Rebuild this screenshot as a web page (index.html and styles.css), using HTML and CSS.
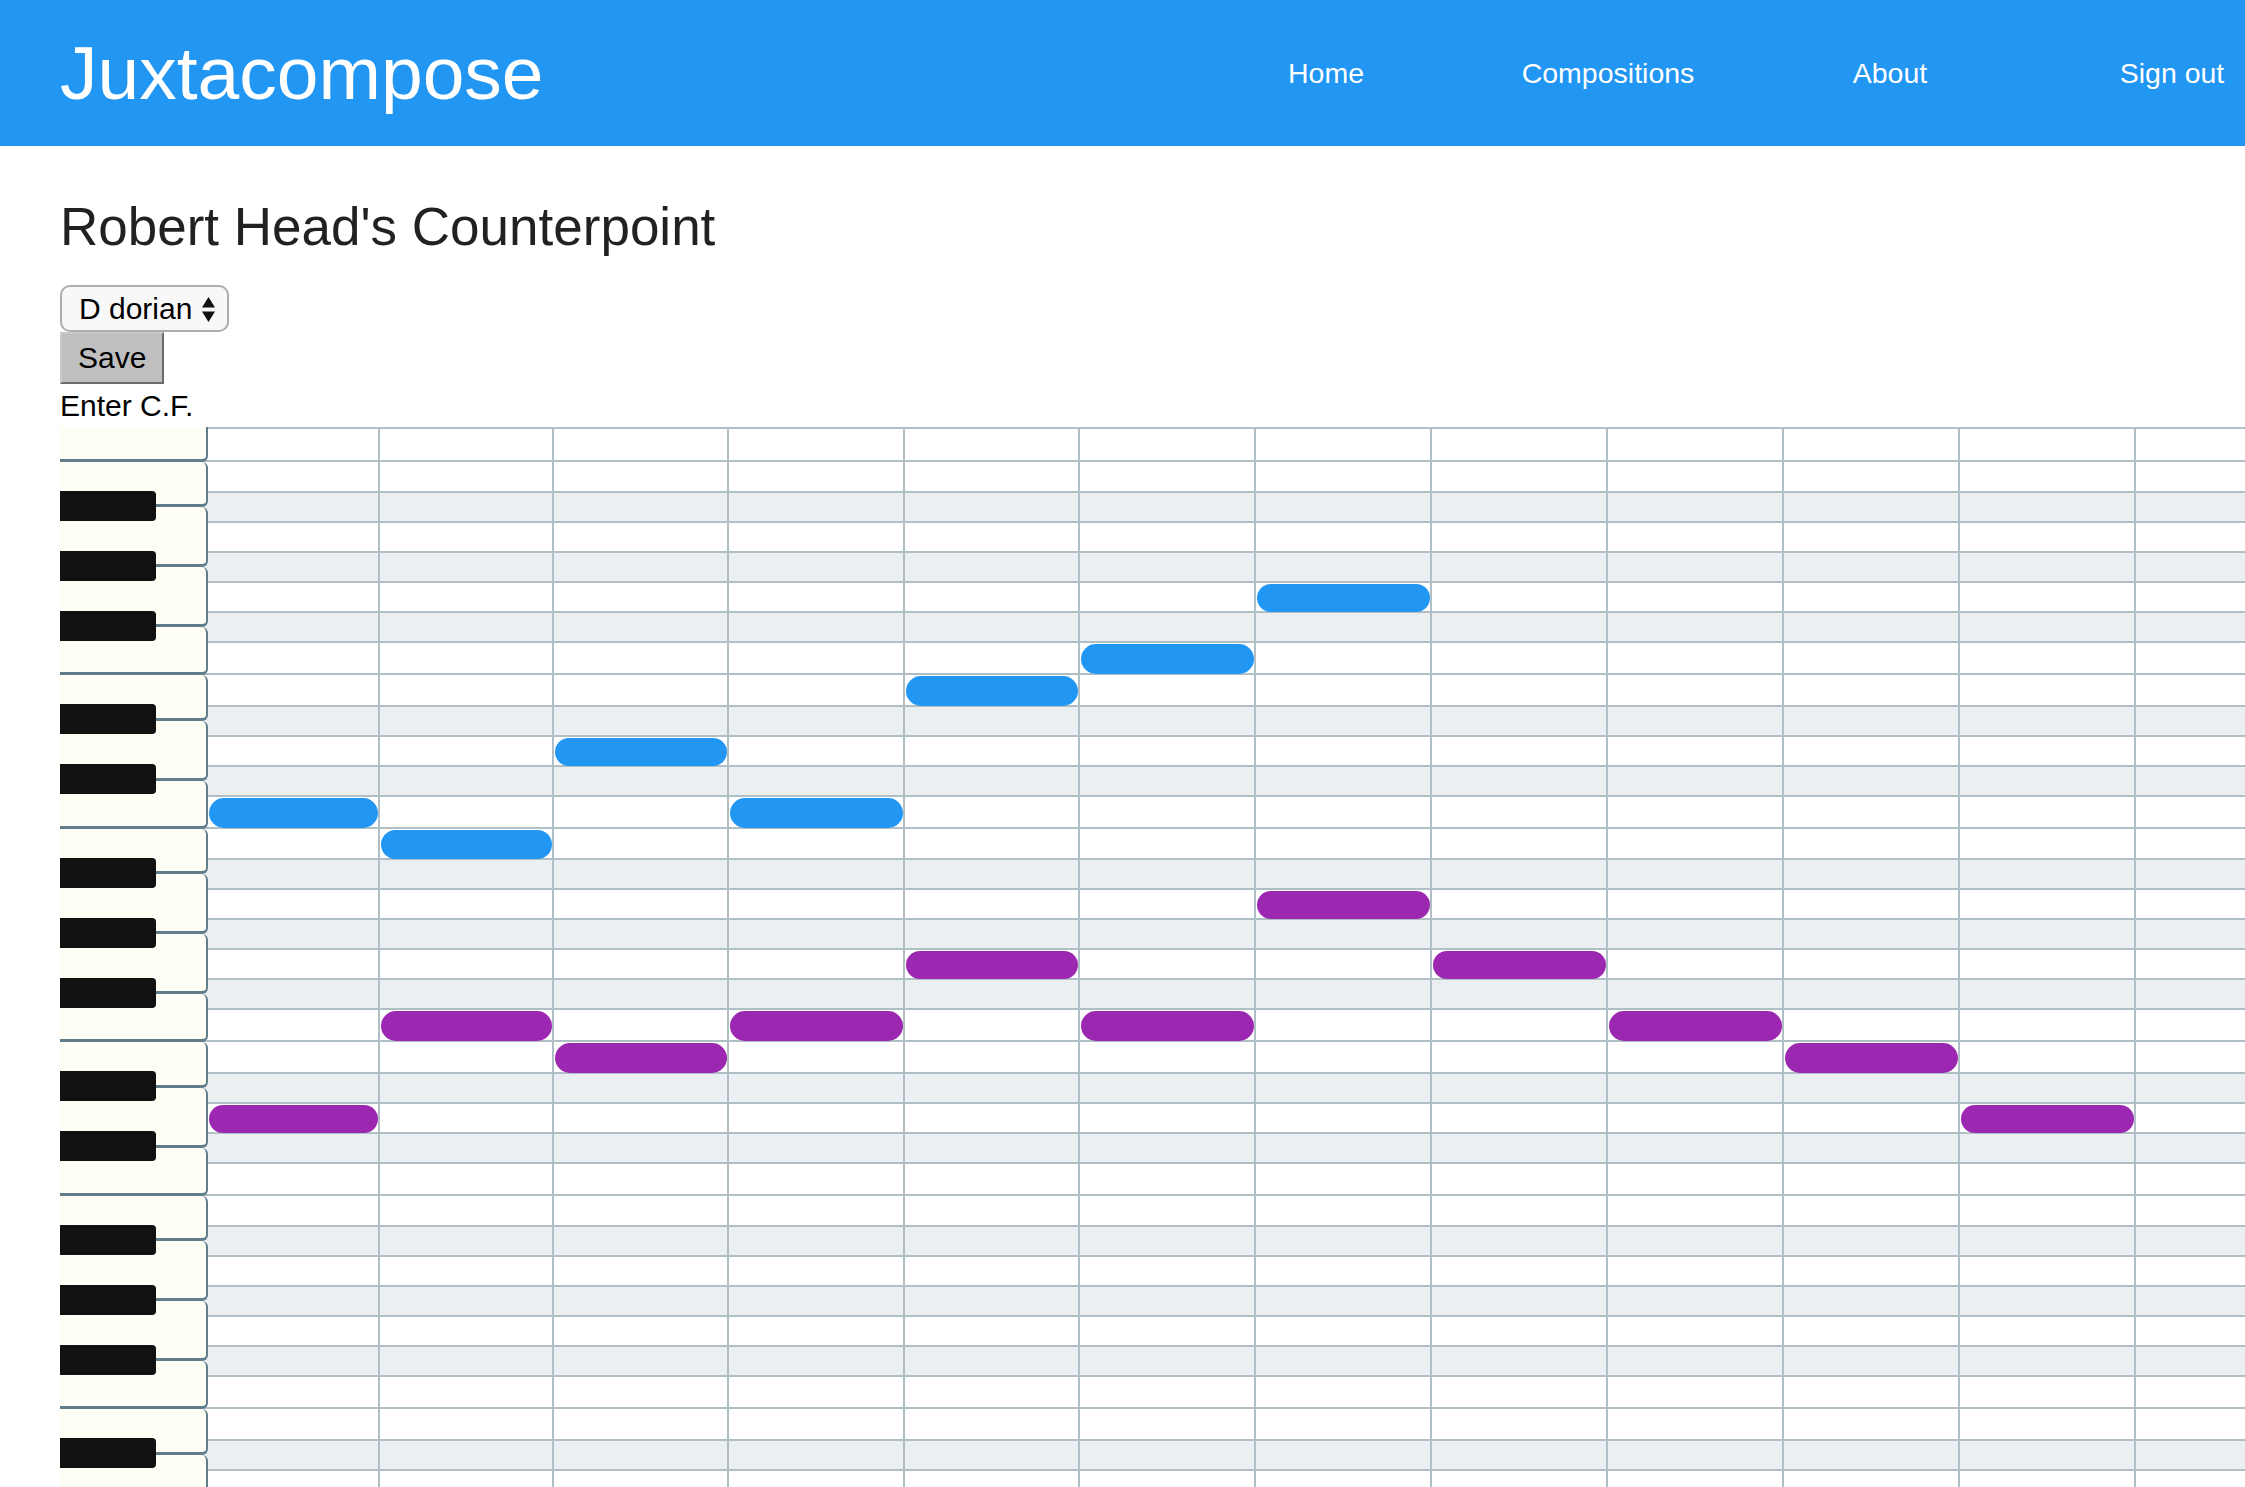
FILE: index.html
```html
<!DOCTYPE html>
<html lang="en">
<head>
<meta charset="utf-8">
<title>Juxtacompose</title>
<link rel="stylesheet" href="styles.css">
</head>
<body>
<header class="topbar">
  <a class="brand" href="#">Juxtacompose</a>
  <ul class="nav">
    <li><a href="#">Home</a></li>
    <li><a href="#">Compositions</a></li>
    <li><a href="#">About</a></li>
    <li><a href="#">Sign out</a></li>
  </ul>
</header>

<main class="page">
  <h1 class="title">Robert Head's Counterpoint</h1>
  <div class="controls">
    <div class="select">
      <span>D dorian</span>
      <svg class="arrows" width="13" height="25" viewBox="0 0 13 25"><polygon points="6.5,0 13,10.5 0,10.5" fill="#111"/><polygon points="0,14.5 13,14.5 6.5,25" fill="#111"/></svg>
    </div>
    <button class="save" type="button">Save</button>
    <div class="label">Enter C.F.</div>
  </div>

  <div class="roll">
    <div class="keys">
      <div class="wk k-top"></div>
      <div class="wk k-b sharp"></div><div class="wk k-a sharp"></div><div class="wk k-g sharp"></div><div class="wk k-f"></div><div class="wk k-e sharp"></div><div class="wk k-d sharp"></div><div class="wk k-c"></div>
      <div class="wk k-b sharp"></div><div class="wk k-a sharp"></div><div class="wk k-g sharp"></div><div class="wk k-f"></div><div class="wk k-e sharp"></div><div class="wk k-d sharp"></div><div class="wk k-c"></div>
      <div class="wk k-b sharp"></div><div class="wk k-a sharp"></div><div class="wk k-g sharp"></div><div class="wk k-f"></div><div class="wk k-e sharp"></div><div class="wk k-d sharp"></div><div class="wk k-c"></div>
    </div>

    <div class="grid">
      <div class="stripes">
        <div class="r top"></div>
        <div class="r w"></div><div class="r b"></div><div class="r"></div><div class="r b"></div><div class="r"></div><div class="r b"></div><div class="r w"></div><div class="r w"></div><div class="r b"></div><div class="r"></div><div class="r b"></div><div class="r w"></div>
        <div class="r w"></div><div class="r b"></div><div class="r"></div><div class="r b"></div><div class="r"></div><div class="r b"></div><div class="r w"></div><div class="r w"></div><div class="r b"></div><div class="r"></div><div class="r b"></div><div class="r w"></div>
        <div class="r w"></div><div class="r b"></div><div class="r"></div><div class="r b"></div><div class="r"></div><div class="r b"></div><div class="r w"></div><div class="r w"></div><div class="r b"></div><div class="r"></div><div class="r b"></div><div class="r w"></div>
      </div>

      <div class="cols">
        <div></div><div></div><div></div><div></div><div></div><div></div><div></div><div></div><div></div><div></div><div></div><div></div><div></div>
      </div>

      <div class="notes">
        <div class="note upper" style="grid-area: 13 / 1"></div>
        <div class="note upper" style="grid-area: 14 / 2"></div>
        <div class="note upper" style="grid-area: 11 / 3"></div>
        <div class="note upper" style="grid-area: 13 / 4"></div>
        <div class="note upper" style="grid-area: 9 / 5"></div>
        <div class="note upper" style="grid-area: 8 / 6"></div>
        <div class="note upper" style="grid-area: 6 / 7"></div>

        <div class="note cf" style="grid-area: 23 / 1"></div>
        <div class="note cf" style="grid-area: 20 / 2"></div>
        <div class="note cf" style="grid-area: 21 / 3"></div>
        <div class="note cf" style="grid-area: 20 / 4"></div>
        <div class="note cf" style="grid-area: 18 / 5"></div>
        <div class="note cf" style="grid-area: 20 / 6"></div>
        <div class="note cf" style="grid-area: 16 / 7"></div>
        <div class="note cf" style="grid-area: 18 / 8"></div>
        <div class="note cf" style="grid-area: 20 / 9"></div>
        <div class="note cf" style="grid-area: 21 / 10"></div>
        <div class="note cf" style="grid-area: 23 / 11"></div>
      </div>
    </div>
  </div>
</main>
</body>
</html>
```

FILE: styles.css
```css
* {
  box-sizing: border-box;
}

html {
  overflow: hidden;
}

body {
  margin: 0;
  background: #fff;
  color: #000;
  font-family: "Liberation Sans", Arial, Helvetica, sans-serif;
}

/* ---------- top bar ---------- */
.topbar {
  display: flex;
  align-items: center;
  height: 146px;
  padding-left: 60px;
  background: #2196f3;
  overflow: hidden;
}

.brand {
  color: #fff;
  font-size: 75px;
  line-height: 146px;
  text-decoration: none;
}

.nav {
  display: flex;
  margin: 0 -68px 0 auto;
  padding: 0;
  list-style: none;
}

.nav li {
  width: 282px;
  text-align: center;
}

.nav a {
  color: #fff;
  font-size: 28.5px;
  line-height: 146px;
  text-decoration: none;
}

/* ---------- page ---------- */
.page {
  padding-left: 60px;
}

.title {
  margin: 51px 0 28px;
  color: rgba(0, 0, 0, 0.87);
  font-size: 53px;
  font-weight: 400;
  line-height: 60px;
}

.controls {
  display: flex;
  flex-direction: column;
  align-items: flex-start;
  font-size: 30px;
}

.select {
  display: flex;
  align-items: center;
  gap: 10px;
  width: 169px;
  height: 47px;
  padding: 0 8px 0 17px;
  border: 2px solid #adadad;
  border-radius: 10px;
  background: #f8f8f8;
  color: #000;
  white-space: nowrap;
}

.arrows {
  flex: none;
  margin-top: 1px;
}

.save {
  height: 52px;
  padding: 0 16px;
  border: 2px solid;
  border-color: #c9c9c9 #6b6b6b #6b6b6b #c9c9c9;
  background: #bfbfbf;
  color: #000;
  font-family: inherit;
  font-size: 30px;
  line-height: 44px;
}

.label {
  line-height: 43px;
}

/* ---------- piano roll ---------- */
.roll {
  display: flex;
  align-items: flex-start;
}

.keys {
  position: relative;
  z-index: 1;
  flex: none;
  display: flex;
  flex-direction: column;
  width: 148px;
  margin-right: -6px;
}

.wk {
  position: relative;
  background: #fffef5;
  border-right: 2px solid #607d8b;
  border-bottom: 3px solid #607d8b;
  border-radius: 0 6px 6px 0;
}

.k-top { height: 34.5px; border-top-right-radius: 0; }
.k-b { height: 45.75px; }
.k-a { height: 60px; }
.k-g { height: 60px; }
.k-f { height: 47.75px; }
.k-e { height: 45.75px; }
.k-d { height: 60px; }
.k-c { height: 47.75px; }

.sharp::after {
  content: "";
  position: absolute;
  z-index: 2;
  left: 0;
  bottom: -16.5px;
  width: 96px;
  height: 30px;
  background: #111;
  border-radius: 0 4px 4px 0;
}

.grid {
  flex: 1;
  min-width: 0;
  display: grid;
  grid-template-columns: minmax(0, 1fr);
  border-top: 2px solid #b0bec5;
  overflow: hidden;
}

.stripes,
.cols,
.notes {
  grid-area: 1 / 1;
}

.r {
  height: 30px;
  border-bottom: 2px solid #b0bec5;
}

.r.w { height: 31.75px; }
.r.top { height: 32.5px; }
.r.b { background: #eceff1; }

.cols,
.notes {
  display: grid;
  padding-left: 6px;
  grid-template-columns: 172px 174px 174.5px 176px repeat(9, 175.9px);
}

.cols div {
  border-right: 2px solid #b0bec5;
}

.notes {
  grid-template-rows: 32.5px repeat(3, 31.75px 30px 30px 30px 30px 30px 31.75px 31.75px 30px 30px 30px 31.75px);
}

.note {
  margin: 1px 2px 1px 1px;
  border-radius: 15px;
}

.note.upper { background: #2196f3; }
.note.cf { background: #9c27b0; }
```
